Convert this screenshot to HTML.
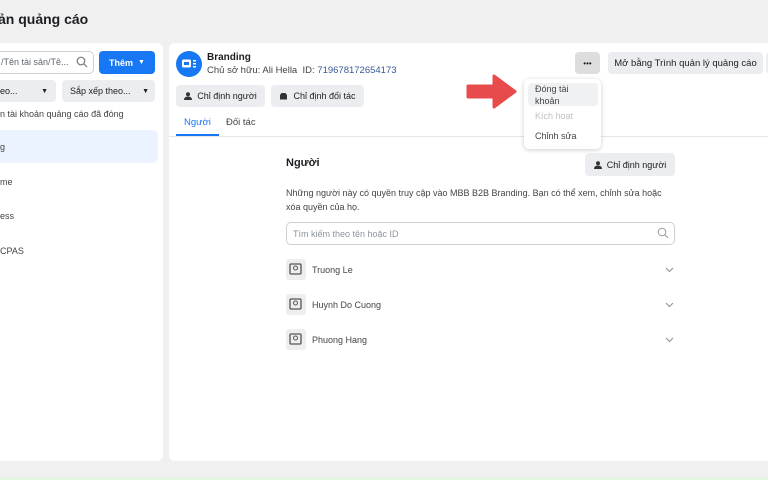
<!DOCTYPE html>
<html><head><meta charset="utf-8"><style>
*{box-sizing:border-box;margin:0;padding:0}
body{width:768px;height:480px;overflow:hidden;background:#f0f0f0;font-family:"Liberation Sans",sans-serif;color:#1c1e21;position:relative;font-size:9px}
.abs{position:absolute}
.panel{position:absolute;background:#fff;border-radius:6px;top:43px;height:418px}
.btn{position:absolute;background:#ebedf0;border-radius:4px;font-size:9px;color:#1c1e21;display:flex;align-items:center;justify-content:center}
.grey{color:#444}
</style></head><body>
<div class="abs" style="left:-2px;top:11px;font-size:14px;font-weight:bold;color:#1c1e21">ản quảng cáo</div>
<div class="panel" style="left:-10px;width:173px"></div>
<div class="panel" style="left:169px;width:620px"></div>
<div class="abs" style="left:0;top:477px;width:768px;height:3px;background:#e3f5e3"></div>

<!-- left -->
<div class="abs" style="left:-6px;top:51px;width:100px;height:23px;border:1px solid #ccd0d5;border-radius:5px;font-size:9px;color:#606770;padding:5px 0 0 6px">/Tên tài sản/Tê...</div>
<svg class="abs" style="left:76px;top:56px" width="12" height="12"><circle cx="5" cy="5" r="3.8" stroke="#777" fill="none" stroke-width="1.2"/><line x1="8" y1="8" x2="11" y2="11" stroke="#777" stroke-width="1.2"/></svg>
<div class="btn" style="left:99px;top:51px;width:56px;height:23px;background:#1877f2;color:#fff;font-weight:bold">Thêm &nbsp;<span style="font-size:7px">▼</span></div>
<div class="btn" style="left:-6px;top:80px;width:62px;height:22px;justify-content:space-between;padding:0 8px 0 6px">eo... <span style="font-size:7px">▼</span></div>
<div class="btn" style="left:62px;top:80px;width:93px;height:22px;justify-content:space-between;padding:0 6px 0 8px">Sắp xếp theo... <span style="font-size:7px">▼</span></div>
<div class="abs grey" style="left:0;top:109px">n tài khoản quảng cáo đã đóng</div>
<div class="abs" style="left:-10px;top:130px;width:168px;height:33px;background:#eaf3ff;border-radius:5px"></div>
<div class="abs grey" style="left:0;top:142px">g</div>
<div class="abs grey" style="left:0;top:177px">me</div>
<div class="abs grey" style="left:0;top:211px">ess</div>
<div class="abs grey" style="left:0;top:246px">CPAS</div>

<!-- right header -->
<div class="abs" style="left:176px;top:51px;width:26px;height:26px;border-radius:50%;background:#1877f2"></div>
<svg class="abs" style="left:181px;top:58px" width="16" height="12"><rect x="1" y="1.5" width="9" height="8" rx="1.5" fill="#fff"/><rect x="3" y="4" width="5" height="3" fill="#1877f2"/><rect x="12" y="2" width="3" height="1.5" fill="#fff"/><rect x="12" y="5" width="3" height="1.5" fill="#fff"/><rect x="12" y="8" width="3" height="1.5" fill="#fff"/></svg>
<div class="abs" style="left:207px;top:52px;font-size:10px;font-weight:bold">Branding</div>
<div class="abs grey" style="left:207px;top:65px;font-size:9.5px">Chủ sở hữu: Ali Hella &nbsp;ID: <span style="color:#385898">719678172654173</span></div>
<div class="btn" style="left:176px;top:85px;width:89px;height:22px"><svg width="8" height="8" style="margin-right:5px"><circle cx="4" cy="2.2" r="2" fill="#333"/><path d="M0 8 Q0 4.5 4 4.5 Q8 4.5 8 8Z" fill="#333"/></svg>Chỉ định người</div>
<div class="btn" style="left:271px;top:85px;width:93px;height:22px"><svg width="9" height="8" style="margin-right:5px"><path d="M1 3 L2.5 1 H6.5 L8 3 V7.5 H1Z" fill="#333"/></svg>Chỉ định đối tác</div>
<div class="abs" style="left:184px;top:117px;font-size:9.5px;color:#1877f2">Người</div>
<div class="abs" style="left:176px;top:134px;width:43px;height:2px;background:#1877f2"></div>
<div class="abs grey" style="left:226px;top:117px;font-size:9.5px">Đối tác</div>
<div class="abs" style="left:169px;top:136px;width:600px;height:1px;background:#e4e6eb"></div>

<div class="btn" style="left:575px;top:52px;width:25px;height:22px;background:#ddd;font-size:8px">•••</div>
<div class="btn" style="left:608px;top:52px;width:155px;height:22px;font-size:9.5px">Mở bằng Trình quản lý quảng cáo</div>
<div class="btn" style="left:766px;top:52px;width:10px;height:22px"></div>

<!-- arrow -->
<svg class="abs" style="left:465px;top:72px" width="54" height="38"><path d="M3 14 H29 V4 L50 19.5 L29 35 V25 H3 Z" fill="#e84b4b" stroke="#e84b4b" stroke-width="3" stroke-linejoin="round"/></svg>

<!-- dropdown -->
<div class="abs" style="left:524px;top:79px;width:77px;height:70px;background:#fff;border-radius:5px;box-shadow:0 1px 5px rgba(0,0,0,.2)"></div>
<div class="abs" style="left:528px;top:83px;width:70px;height:23px;background:#f0f1f3;border-radius:4px"></div>
<div class="abs grey" style="left:535px;top:83px;line-height:12px">Đóng tài<br>khoản</div>
<div class="abs" style="left:535px;top:111px;color:#bcc0c4">Kích hoạt</div>
<div class="abs grey" style="left:535px;top:131px">Chỉnh sửa</div>

<!-- people section -->
<div class="abs" style="left:286px;top:157px;font-size:11px;font-weight:bold">Người</div>
<div class="btn" style="left:585px;top:153px;width:90px;height:23px"><svg width="8" height="8" style="margin-right:5px"><circle cx="4" cy="2.2" r="2" fill="#333"/><path d="M0 8 Q0 4.5 4 4.5 Q8 4.5 8 8Z" fill="#333"/></svg>Chỉ định người</div>
<div class="abs grey" style="left:286px;top:186px;line-height:14px;width:400px">Những người này có quyền truy cập vào MBB B2B Branding. Bạn có thể xem, chỉnh sửa hoặc<br>xóa quyền của họ.</div>
<div class="abs" style="left:286px;top:222px;width:389px;height:23px;border:1px solid #ccd0d5;border-radius:5px;color:#8d949e;padding:6px 0 0 6px">Tìm kiếm theo tên hoặc ID</div>
<svg class="abs" style="left:657px;top:227px" width="12" height="12"><circle cx="5" cy="5" r="3.8" stroke="#999" fill="none" stroke-width="1"/><line x1="8" y1="8" x2="11" y2="11" stroke="#999" stroke-width="1"/></svg>

<div class="abs" style="left:286px;top:259px;width:20px;height:21px;background:#eee;border-radius:3px"></div>
<div class="abs" style="left:286px;top:294px;width:20px;height:21px;background:#eee;border-radius:3px"></div>
<div class="abs" style="left:286px;top:329px;width:20px;height:21px;background:#eee;border-radius:3px"></div>
<svg class="abs" style="left:289px;top:263px" width="14" height="13"><rect x="1" y="1" width="11" height="10" rx="1" fill="none" stroke="#555" stroke-width="1.3"/><circle cx="6.5" cy="5" r="2" fill="none" stroke="#555"/></svg>
<svg class="abs" style="left:289px;top:298px" width="14" height="13"><rect x="1" y="1" width="11" height="10" rx="1" fill="none" stroke="#555" stroke-width="1.3"/><circle cx="6.5" cy="5" r="2" fill="none" stroke="#555"/></svg>
<svg class="abs" style="left:289px;top:333px" width="14" height="13"><rect x="1" y="1" width="11" height="10" rx="1" fill="none" stroke="#555" stroke-width="1.3"/><circle cx="6.5" cy="5" r="2" fill="none" stroke="#555"/></svg>
<div class="abs grey" style="left:312px;top:265px">Truong Le</div>
<div class="abs grey" style="left:312px;top:300px">Huynh Do Cuong</div>
<div class="abs grey" style="left:312px;top:335px">Phuong Hang</div>
<svg class="abs" style="left:665px;top:267px" width="9" height="6"><path d="M1 1 L4.5 4.5 L8 1" stroke="#999" fill="none" stroke-width="1.2"/></svg>
<svg class="abs" style="left:665px;top:302px" width="9" height="6"><path d="M1 1 L4.5 4.5 L8 1" stroke="#999" fill="none" stroke-width="1.2"/></svg>
<svg class="abs" style="left:665px;top:337px" width="9" height="6"><path d="M1 1 L4.5 4.5 L8 1" stroke="#999" fill="none" stroke-width="1.2"/></svg>
</body></html>
